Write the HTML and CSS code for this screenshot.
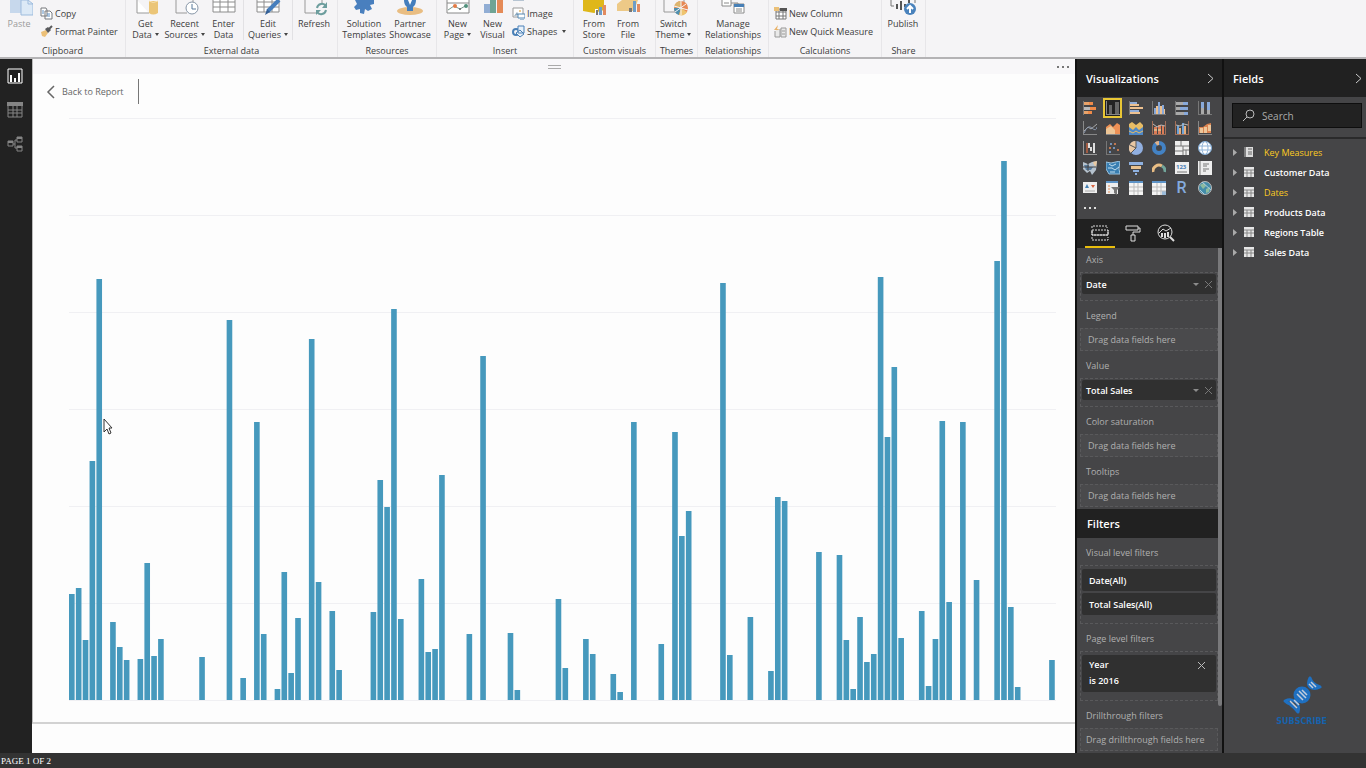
FILE: index.html
```html
<!DOCTYPE html>
<html lang="en">
<head>
    <meta charset="UTF-8">
    <meta name="viewport" content="width=device-width, initial-scale=1.0">
    <title>Report</title>
    <link rel="stylesheet" href="styles.css">
</head>
<body>
    <header class="ribbon">
        <section class="group">
            <div class="items">
                <button class="big paste"><svg width="28" height="17" viewBox="0 0 28 17"><path d="M5 0H17V13H5Z" fill="#c7d8ec"/><path d="M16 0H23L28 4V15H16Z" fill="#dce9f6" stroke="#9dbbdd"/><path d="M23 0V4H28" fill="none" stroke="#9dbbdd"/></svg><span>Paste</span></button>
                <div class="small-list">
                    <button class="small" aria-label="Cut"><svg width="13" height="13" viewBox="0 0 13 13"><circle cx="4" cy="8" r="2" fill="none" stroke="#999"/><circle cx="9" cy="8" r="2" fill="none" stroke="#999"/></svg></button>
                    <button class="small"><svg width="13" height="13" viewBox="0 0 13 13"><path d="M1 1H6L7 3V9H1ZM5 4H10L12 6V12H5Z" fill="#fff" stroke="#77797d"/><path d="M7 7H10M7 9H10M2 4H4M2 6H4" stroke="#5c8fc4"/></svg>Copy</button>
                    <button class="small"><svg width="13" height="13" viewBox="0 0 13 13"><path d="M1 7L6 5L8 8L5 12L2 11Z" fill="#ecc078"/><path d="M5 4L8 2L11 5L8 8Z" fill="#58595c"/><path d="M9 4L12 1" stroke="#58595c" stroke-width="2"/></svg>Format Painter</button>
                </div>
            </div>
            <h2>Clipboard</h2>
        </section>
        <section class="group">
            <div class="items">
                <button class="big w39"><svg width="28" height="17" viewBox="0 0 28 17"><path d="M5 0V13H17" fill="#fff" stroke="#999"/><path d="M17 1V13Q21 16 26 13V1Z" fill="#ebc577"/><path d="M17 1Q21 4 26 1" stroke="#f8e2b2" fill="none"/></svg><span>Get<br>Data<i></i></span></button>
                <button class="big w39"><svg width="28" height="17" viewBox="0 0 28 17"><path d="M5 0V13H16M22 0V2" fill="none" stroke="#999"/><circle cx="21" cy="8" r="6" fill="#fff" stroke="#8796a7"/><path d="M21 4V9H25" fill="none" stroke="#58789a"/></svg><span>Recent<br>Sources<i></i></span></button>
                <button class="big w39"><svg width="28" height="17" viewBox="0 0 28 17"><path d="M3 -2H25V12H3ZM3 2H25M3 7H25M10 0V12M18 0V12" fill="#fff" stroke="#8c8c8c"/></svg><span>Enter<br>Data</span></button>
                <button class="big w50 lined"><svg width="28" height="17" viewBox="0 0 28 17"><path d="M3 -2H25V12H3ZM3 2H25M3 7H25M10 0V12M18 0V12" fill="#fff" stroke="#8c8c8c"/><path d="M25 0L14 11" stroke="#477fbd" stroke-width="4"/><path d="M11 15L13 9L16 12Z" fill="#335f96"/></svg><span>Edit<br>Queries<i></i></span></button>
                <button class="big w42"><svg width="28" height="17" viewBox="0 0 28 17"><path d="M5 0V13H17M22 0V3" fill="none" stroke="#999"/><path d="M17 8A5 5 0 0 1 26 6M26 10A5 5 0 0 1 17 12" fill="none" stroke="#6c9d9d" stroke-width="2"/><path d="M27 2V8H22ZM16 15V10H21Z" fill="#6c9d9d"/></svg><span>Refresh</span></button>
            </div>
            <h2>External data</h2>
        </section>
        <section class="group">
            <div class="items pad">
                <button class="big w46"><svg width="28" height="17" viewBox="0 0 28 17"><path d="M4 -2H24V4L20 5L22 9L18 11L15 9L14 14L10 13V9L6 10L4 7L7 4Z" fill="#497fbe"/></svg><span>Solution<br>Templates</span></button>
                <button class="big w46"><svg width="28" height="17" viewBox="0 0 28 17"><ellipse cx="14" cy="11" rx="13" ry="4" fill="#e9bd82"/><path d="M8 0H20Q20 5 17 7V11H11V7Q8 5 8 0Z" fill="#447ebd"/><path d="M12 0H16L14 5Z" fill="#fff"/></svg><span>Partner<br>Showcase</span></button>
            </div>
            <h2>Resources</h2>
        </section>
        <section class="group">
            <div class="items pad">
                <button class="big w35"><svg width="28" height="17" viewBox="0 0 28 17"><path d="M3 -1H25V13H3ZM3 3H25" fill="#fff" stroke="#888"/><path d="M4 10L10 6L16 9L23 5" fill="none" stroke="#78958a"/><circle cx="11" cy="6" r="2" fill="#e47b45"/><circle cx="22" cy="6" r="2" fill="#51917c"/><circle cx="16" cy="9" r="1" fill="#666"/></svg><span>New<br>Page<i></i></span></button>
                <button class="big w35"><svg width="28" height="17" viewBox="0 0 28 17"><path d="M5 4H11V13H5Z" fill="#91add4"/><path d="M11 0H17V13H11Z" fill="#70a494"/><path d="M18 0H24V13H18Z" fill="#e58a57"/></svg><span>New<br>Visual</span></button>
                <div class="small-list">
                    <button class="small" aria-label="Text box"><svg width="13" height="13" viewBox="0 0 13 13"><path d="M1 1H12V11H1Z" fill="#dce9f6" stroke="#7993ae"/></svg></button>
                    <button class="small"><svg width="13" height="13" viewBox="0 0 13 13"><path d="M1 1H11V10H1Z" fill="#fff" stroke="#999"/><path d="M2 9L5 5L7 8" fill="#8da8bd"/><circle cx="8" cy="4" r="1" fill="#e9b869"/><path d="M6 7H13V11H6ZM8 13H12" fill="#fff" stroke="#5489b4"/></svg>Image</button>
                    <button class="small"><svg width="13" height="13" viewBox="0 0 13 13"><circle cx="4" cy="7" r="3" fill="none" stroke="#4a80b7" stroke-width="2"/><path d="M6 1H12V8H6ZM4 8L8 5L12 9L8 12Z" fill="#e8f1fa" stroke="#4a80b7"/></svg>Shapes<i></i></button>
                </div>
            </div>
            <h2>Insert</h2>
        </section>
        <section class="group">
            <div class="items pad">
                <button class="big w34"><svg width="28" height="17" viewBox="0 0 28 17"><path d="M3 0H24V10L14 13L3 11Z" fill="#dfb719"/><path d="M15 9H18V15H15Z" fill="#fff"/><path d="M16 10H18V15H16Z" fill="#777"/><path d="M19 7H22V15H19Z" fill="#6e9dc8"/><path d="M23 5H26V15H23Z" fill="#e28b60"/></svg><span>From<br>Store</span></button>
                <button class="big w34"><svg width="28" height="17" viewBox="0 0 28 17"><path d="M3 11V4L8 0H24L20 11Z" fill="#edc987"/><path d="M15 8H18V12H15Z" fill="#777"/><path d="M19 1H22V12H19Z" fill="#6e9dc8"/><path d="M23 4H26V12H23Z" fill="#e28b60"/></svg><span>From<br>File</span></button>
            </div>
            <h2>Custom visuals</h2>
        </section>
        <section class="group">
            <div class="items">
                <button class="big w35"><svg width="28" height="17" viewBox="0 0 28 17"><path d="M4 0V12H18M24 0V3" fill="none" stroke="#999"/><circle cx="21" cy="8" r="7" fill="#e78854"/><path d="M21 8V1A7 7 0 0 0 14 7Z" fill="#ddb56e"/><path d="M21 8L14 8A7 7 0 0 0 19 15Z" fill="#508fae"/><path d="M21 8L27 12A7 7 0 0 1 19 15Z" fill="#eec46f"/><path d="M21 1V15M14 6L28 10M15 12L26 4" stroke="#f5f4f6"/></svg><span>Switch<br>Theme<i></i></span></button>
            </div>
            <h2>Themes</h2>
        </section>
        <section class="group">
            <div class="items">
                <button class="big w70"><svg width="28" height="17" viewBox="0 0 28 17"><path d="M3 -3H12V6H3ZM5 3H10" fill="#fff" stroke="#8a8a8a"/><path d="M12 3H19V6" fill="none" stroke="#8a8a8a"/><path d="M15 4H25V13H15ZM17 9H23M17 11H23" fill="#fff" stroke="#8a8a8a"/><path d="M15 4H25V7H15Z" fill="#477fb6"/></svg><span>Manage<br>Relationships</span></button>
            </div>
            <h2>Relationships</h2>
        </section>
        <section class="group">
            <div class="items pad">
                <div class="small-list">
                    <button class="small" aria-label="New Measure"><svg width="13" height="13" viewBox="0 0 13 13"><path d="M3 5H12V11H3Z" fill="#aaa"/></svg></button>
                    <button class="small"><svg width="13" height="13" viewBox="0 0 13 13"><path d="M2 2H12V12H2ZM2 5H12M2 9H12M5 2V12M9 2V12" fill="#fff" stroke="#777"/><path d="M0 0H5V4H0Z" fill="#ebc077"/><path d="M6 1H13V4H6Z" fill="#555"/></svg>New Column</button>
                    <button class="small"><svg width="13" height="13" viewBox="0 0 13 13"><path d="M0 5L4 0L3 4H6L1 9L3 5Z" fill="#e9b36a"/><path d="M1 6V12H6V4M7 3H12V12H7ZM8 6H11M8 9H11" fill="#e9e9e9" stroke="#999"/></svg>New Quick Measure</button>
                </div>
            </div>
            <h2>Calculations</h2>
        </section>
        <section class="group">
            <div class="items">
                <button class="big w42"><svg width="28" height="17" viewBox="0 0 28 17"><path d="M2 0V6H5M26 0V3" fill="none" stroke="#777"/><path d="M8 4V9M12 1V10M16 4V7M20 0V3" stroke="#555" stroke-width="2"/><circle cx="21" cy="9" r="6" fill="#4982bc"/><path d="M21 13V6M18 9L21 6L24 9" fill="none" stroke="#fff" stroke-width="2"/></svg><span>Publish</span></button>
            </div>
            <h2>Share</h2>
        </section>
    </header>

    <div class="workspace">
        <nav class="rail">
            <button aria-label="Report view"><svg width="16" height="16" viewBox="0 0 16 16"><path d="M1 1H15V15H1Z" fill="none" stroke="#fff"/><path d="M4 14V7M8 14V10M12 14V5" stroke="#fff" stroke-width="2"/></svg></button>
            <button aria-label="Data view"><svg width="16" height="16" viewBox="0 0 16 16"><path d="M1 1H15V15H1ZM1 8H15M1 11H15M6 4V15M10 4V15" fill="none" stroke="#858585"/><path d="M0 0H16V4H0Z" fill="#858585"/></svg></button>
            <button aria-label="Relationship view"><svg width="16" height="16" viewBox="0 0 16 16"><path d="M1 5H6V10H1ZM10 1H15V6H10ZM10 10H15V15H10ZM6 8H8M8 4V12M8 4H10M8 12H10" fill="none" stroke="#858585"/><path d="M1 5H6V7H1ZM10 1H15V3H10ZM10 10H15V12H10Z" fill="#858585"/></svg></button>
        </nav>

        <main class="canvas">
            <div class="page">
                <div class="visual-bar">
                    <span></span>
                    <div class="grip"></div>
                    <button class="more" aria-label="More options"><svg width="12" height="3" viewBox="0 0 12 3"><path d="M0 1H2V3H0ZM5 1H7V3H5ZM10 1H12V3H10Z" fill="#777"/></svg></button>
                </div>
                <button class="back"><svg width="9" height="14" viewBox="0 0 9 14"><path d="M8 1L2 7L8 13" fill="none" stroke="#666" stroke-width="1.500"/></svg>Back to Report</button>
                <svg class="chart" id="chart" viewBox="0 0 987 583" preserveAspectRatio="none" role="img" aria-label="Total Sales by Date"></svg>
            </div>
            <svg class="cursor" width="10" height="17" viewBox="0 0 10 17"><path d="M1 1V14L4 11L6 16L8 15L6 10H9Z" fill="#fff" stroke="#333"/></svg>
        </main>

        <aside class="viz">
            <header class="pane-head"><h1>Visualizations</h1><button aria-label="Collapse visualizations"><svg width="7" height="11" viewBox="0 0 7 11"><path d="M1 1L6 5.500L1 10" fill="none" stroke="#ccc"/></svg></button></header>
            <div class="gallery">
                <button aria-label="Stacked bar"><svg viewBox="0 0 14 14"><path d="M.5 0V14" stroke="#777"/><path d="M1 1H6V4H1ZM1 10H5V13H1Z" fill="#e8a36a"/><path d="M6 1H10V4H6ZM5 10H9V13H5Z" fill="#ee8a49"/><path d="M1 6H7V9H1Z" fill="#bbb"/><path d="M7 6H13V9H7Z" fill="#ee8a49"/></svg></button>
                <button class="selected" aria-label="Stacked column"><svg viewBox="0 0 14 14"><path d="M.5 0V14M0 13.500H14" stroke="#888"/><path d="M3 4H6V13H3ZM9 1H13V13H9Z" fill="#666"/></svg></button>
                <button aria-label="Clustered bar"><svg viewBox="0 0 14 14"><path d="M.5 0V14" stroke="#777"/><path d="M1 1H8V3H1ZM1 9H10V11H1Z" fill="#91add8"/><path d="M1 3H10V5H1ZM1 6H14V8H1ZM1 11H11V13H1Z" fill="#edc08f"/></svg></button>
                <button aria-label="Clustered column"><svg viewBox="0 0 14 14"><path d="M.5 0V14M0 13.500H14" stroke="#777"/><path d="M2 7H4V13H2ZM6 1H8V13H6ZM10 4H12V13H10Z" fill="#88a9da"/><path d="M4 5H6V13H4ZM8 5H10V13H8ZM12 8H13V13H12Z" fill="#edc08f"/></svg></button>
                <button aria-label="100% stacked bar"><svg viewBox="0 0 14 14"><path d="M.5 0V14" stroke="#777"/><path d="M1 1H8V4H1ZM1 6H5V9H1ZM1 11H9V14H1Z" fill="#aaa"/><path d="M8 1H13V4H8ZM5 6H13V9H5ZM9 11H13V14H9Z" fill="#88a9da"/></svg></button>
                <button aria-label="100% stacked column"><svg viewBox="0 0 14 14"><path d="M.5 0V14M0 13.500H14" stroke="#777"/><path d="M3 1H6V7H3ZM9 1H12V9H9Z" fill="#88a9da"/><path d="M3 7H6V13H3ZM9 9H12V13H9Z" fill="#aaa"/></svg></button>

                <button aria-label="Line"><svg viewBox="0 0 14 14"><path d="M.5 0V14M0 13.500H14" stroke="#888"/><path d="M1 10L5 6L8 8L14 3" fill="none" stroke="#aaa"/><path d="M1 12Q5 3 9 7T14 6" fill="none" stroke="#8794a9"/></svg></button>
                <button aria-label="Area"><svg viewBox="0 0 14 14"><path d="M0 6L4 3L7 6L11 2L14 4V13H0Z" fill="#ed9055"/><path d="M0 8L5 5L9 9V13H0Z" fill="#edc595"/><path d="M0 13.500H14" stroke="#888"/></svg></button>
                <button aria-label="Stacked area"><svg viewBox="0 0 14 14"><path d="M0 3L3 1L7 4L11 1L14 4V13H0Z" fill="#e7bc65"/><path d="M0 6L4 9L7 6L10 9L14 6V14H0Z" fill="#4d87c7"/><path d="M0 10L4 12L7 10L10 12L14 10" stroke="#e7bc65" fill="none"/></svg></button>
                <button aria-label="Line and stacked column"><svg viewBox="0 0 14 14"><path d="M.5 0V14M0 13.500H14M13.500 0V14" stroke="#a37059"/><path d="M2 6H5V13H2ZM6 4H9V13H6ZM10 5H12V13H10Z" fill="#dc7d57"/><path d="M2 8H5V10H2ZM6 8H9V10H6Z" fill="#ddb184"/><path d="M1 3L5 6L9 4L13 5" fill="none" stroke="#bbb"/></svg></button>
                <button aria-label="Line and clustered column"><svg viewBox="0 0 14 14"><path d="M.5 0V14M0 13.500H14M13.500 0V14" stroke="#a37059"/><path d="M2 5H4V13H2ZM7 2H9V13H7Z" fill="#6ea3d8"/><path d="M4 7H6V13H4ZM9 5H11V13H9Z" fill="#e6ae7b"/><path d="M1 4L5 5L9 3L13 4" fill="none" stroke="#bbb"/></svg></button>
                <button aria-label="Ribbon"><svg viewBox="0 0 14 14"><path d="M.5 0V14M0 13.500H14" stroke="#888"/><path d="M1 6L5 6L9 3L13 2V12H1Z" fill="#d98250"/><path d="M2 7H5V12H2ZM6 6H9V12H6ZM10 4H13V10H10Z" fill="#ecc69a"/></svg></button>

                <button aria-label="Waterfall"><svg viewBox="0 0 14 14"><path d="M.5 0V14M0 13.500H14" stroke="#999"/><path d="M3 2H5V12H3Z" fill="#a05b43"/><path d="M5 2H7V7H5ZM7 6H9V10H7ZM10 2H12V12H10Z" fill="#ddd"/></svg></button>
                <button aria-label="Scatter"><svg viewBox="0 0 14 14"><path d="M.5 0V14M0 13.500H14" stroke="#777"/><g fill="#e98955"><circle cx="4" cy="7" r="1"/><circle cx="9" cy="3" r="1"/><circle cx="12" cy="9" r="1"/></g><g fill="#83aada"><circle cx="5" cy="3" r="1"/><circle cx="8" cy="7" r="1"/><circle cx="4" cy="11" r="1"/></g></svg></button>
                <button aria-label="Pie"><svg viewBox="0 0 14 14"><circle cx="7" cy="7" r="7" fill="#91afe0"/><path d="M7 7L7 0A7 7 0 0 0 2 12Z" fill="#e9c7a3"/><path d="M7 0V7L2 12M7 7L1 4" stroke="#555" fill="none"/></svg></button>
                <button aria-label="Donut"><svg viewBox="0 0 14 14"><circle cx="7" cy="7" r="5" fill="none" stroke="#4382c4" stroke-width="4"/><path d="M4 3A5 5 0 0 1 7 2" fill="none" stroke="#e2b38a" stroke-width="4"/></svg></button>
                <button aria-label="Treemap"><svg viewBox="0 0 14 14"><path d="M0 0H14V14H0Z" fill="#eee"/><path d="M0 5H14M6 0V5M8 5V14M8 9H14M11 9V14M0 10H8" stroke="#777"/></svg></button>
                <button aria-label="Map"><svg viewBox="0 0 14 14"><circle cx="7" cy="7" r="6.500" fill="#fff" stroke="#81acd8"/><ellipse cx="7" cy="7" rx="3" ry="6.500" fill="none" stroke="#8fb4d9"/><path d="M1 5H13M1 9H13" stroke="#8fb4d9"/></svg></button>

                <button aria-label="Filled map"><svg viewBox="0 0 14 14"><path d="M0 1L5 3L9 1L14 0L13 9L9 14L7 10L4 12L0 8Z" fill="#b5c2ce"/><path d="M1 4H6V6H10L8 9H3Z" fill="#587ea2"/><path d="M10 1L14 0L13 6L11 4Z" fill="#e8c8a1"/><path d="M0 6H13M5 2V10" stroke="#454547"/></svg></button>
                <button aria-label="Shape map"><svg viewBox="0 0 14 14"><path d="M0 1L5 2L14 0L13 8L14 13H3L0 8Z" fill="#397eb1" stroke="#9bc3df"/><path d="M3 3L6 5L10 3M2 7H6L9 9L13 6M4 11H9" stroke="#c4deee" fill="none"/></svg></button>
                <button aria-label="Funnel"><svg viewBox="0 0 14 14"><path d="M0 1H14V4H0ZM4 9H10V11H4Z" fill="#8eb0df"/><path d="M2 5H12V8H2Z" fill="#e8c08d"/><path d="M6 12H8V14H6Z" fill="#8eb0df"/></svg></button>
                <button aria-label="Gauge"><svg viewBox="0 0 14 14"><path d="M1 11A6 6 0 0 1 10 5" fill="none" stroke="#e9bd84" stroke-width="3"/><path d="M10 5A6 6 0 0 1 13 11" fill="none" stroke="#72a69b" stroke-width="3"/></svg></button>
                <button aria-label="Card"><svg viewBox="0 0 14 14"><path d="M0 1H14V13H0Z" fill="#eee"/><text x="1" y="8" class="card-num">123</text><path d="M2 11H12" stroke="#777"/></svg></button>
                <button aria-label="Multi-row card"><svg viewBox="0 0 14 14"><path d="M0 0H14V14H0Z" fill="#eee"/><path d="M2 0V14M5 3H11M5 5H9M5 8H11M5 10H8" stroke="#777"/></svg></button>

                <button aria-label="KPI"><svg viewBox="0 0 14 14"><path d="M0 1H14V12H0Z" fill="#eee"/><path d="M2 7L4 3L6 7Z" fill="#4380b4"/><path d="M8 4H12L10 7Z" fill="#d8623e"/><path d="M2 10H12" stroke="#aaa"/></svg></button>
                <button aria-label="Slicer"><svg viewBox="0 0 14 14"><path d="M0 1H12V13H0Z" fill="#eee"/><path d="M0 0H12V2H0Z" fill="#5d93c7"/><path d="M2 5H4M2 8H4M2 11H4" stroke="#e68c54"/><path d="M5 6H14L11 9V14L8 12V9Z" fill="#777"/></svg></button>
                <button aria-label="Table"><svg viewBox="0 0 14 14"><path d="M0 1H14V14H0Z" fill="#f4f4f4"/><path d="M0 0H14V2H0Z" fill="#5d93c7"/><path d="M0 6H14M0 10H14M5 2V14M9 2V14" stroke="#bbb"/></svg></button>
                <button aria-label="Matrix"><svg viewBox="0 0 14 14"><path d="M0 1H14V14H0Z" fill="#f4f4f4"/><path d="M0 0H14V2H0Z" fill="#5d93c7"/><path d="M10 10H14V14H10Z" fill="#9bbbd9"/><path d="M0 6H14M0 10H14M5 2V14M9 2V14" stroke="#bbb"/></svg></button>
                <button class="r-visual" aria-label="R script visual">R</button>
                <button aria-label="ArcGIS map"><svg viewBox="0 0 14 14"><circle cx="7" cy="7" r="6.500" fill="#438ca8" stroke="#bbb"/><path d="M2 4L6 2L8 5L5 8ZM8 8L12 6L11 11L8 12Z" fill="#8cbba0"/><path d="M2 9L6 13M4 1L13 9" stroke="#b0cede"/></svg></button>
                <button class="gallery-more" aria-label="More visuals"><svg class="dots" viewBox="0 0 14 3"><path d="M1 0H3V2H1ZM6 0H8V2H6ZM11 0H13V2H11Z" fill="#ddd"/></svg></button>
            </div>
            <div class="tabs">
                <button class="active" aria-label="Fields"><svg width="18" height="18" viewBox="0 0 18 18"><path d="M1 4V2H16V4M1 6H17V11H1ZM1 13V16H17V13" fill="none" stroke="#ddd" stroke-dasharray="2 1"/><path d="M1 6V11H17V6" fill="none" stroke="#ddd"/></svg></button>
                <button aria-label="Format"><svg width="18" height="18" viewBox="0 0 18 18"><path d="M2 2H14V6H2ZM14 4H16V8H9V11M7 11H11V17H7Z" fill="none" stroke="#ddd"/></svg></button>
                <button aria-label="Analytics"><svg width="18" height="18" viewBox="0 0 18 18"><circle cx="8" cy="8" r="7" fill="none" stroke="#ddd"/><path d="M13 13L17 17" stroke="#ddd" stroke-width="2"/><path d="M2 9L6 5L9 7L14 4" fill="none" stroke="#ddd"/><path d="M5 9V13M8 9V14M11 8V13" stroke="#ddd" stroke-width="2"/></svg></button>
            </div>
            <div class="wells">
                <div class="wells-body">
                    <div class="section">
                        <h3>Axis</h3>
                        <div class="well"><div class="chip"><b>Date</b><button class="drop" aria-label="Date options"></button><button class="remove" aria-label="Remove Date"><svg width="7" height="7" viewBox="0 0 7 7"><path d="M0 0L7 7M7 0L0 7"/></svg></button></div></div>
                        <h3>Legend</h3>
                        <div class="well empty">Drag data fields here</div>
                        <h3>Value</h3>
                        <div class="well"><div class="chip"><b>Total Sales</b><button class="drop" aria-label="Total Sales options"></button><button class="remove" aria-label="Remove Total Sales"><svg width="7" height="7" viewBox="0 0 7 7"><path d="M0 0L7 7M7 0L0 7"/></svg></button></div></div>
                        <h3>Color saturation</h3>
                        <div class="well empty">Drag data fields here</div>
                        <h3>Tooltips</h3>
                        <div class="well empty">Drag data fields here</div>
                    </div>
                    <h1 class="filters-head">Filters</h1>
                    <div class="section filters">
                        <h3>Visual level filters</h3>
                        <div class="well">
                            <div class="chip">Date(All)</div>
                            <div class="chip">Total Sales(All)</div>
                        </div>
                        <h3>Page level filters</h3>
                        <div class="well"><div class="chip tall"><p>Year<br>is 2016</p><button class="remove light" aria-label="Remove Year"><svg width="7" height="7" viewBox="0 0 7 7"><path d="M0 0L7 7M7 0L0 7"/></svg></button></div></div>
                        <h3>Drillthrough filters</h3>
                        <div class="well empty">Drag drillthrough fields here</div>
                    </div>
                </div>
                <div class="scrollbar"></div>
            </div>
        </aside>

        <aside class="fields">
            <header class="pane-head"><h1>Fields</h1><button aria-label="Collapse fields"><svg width="7" height="11" viewBox="0 0 7 11"><path d="M1 1L6 5.500L1 10" fill="none" stroke="#ccc"/></svg></button></header>
            <div class="search-row">
                <label class="search"><svg width="13" height="13" viewBox="0 0 13 13"><circle cx="8" cy="5" r="4" fill="none" stroke="#bbb"/><path d="M5 8L1 12" stroke="#bbb"/></svg><input type="text" placeholder="Search" aria-label="Search"></label>
            </div>
            <ul class="tree" id="tree"></ul>
            <a class="subscribe" href="#">
                <svg width="40" height="40" viewBox="0 0 40 40"><g fill="#1f70c1" stroke="#1f70c1" stroke-width="3" stroke-linejoin="round"><path d="M3 26Q9 23 14 27Q18 31 16 37Q12 32 8 29Q5 28 3 26Z" fill="none"/><circle cx="20" cy="20" r="7"/><path d="M28 3Q25 9 28 12Q32 15 38 12Q33 10 31 8Q29 6 28 3Z"/></g><path d="M8 26L15 33M12 25L17 30M15 19L21 25M17 16L24 23M20 15L25 20M27 9L31 13M29 7L34 12" stroke="#c2cddd" stroke-width="1.500"/></svg>
                <span>SUBSCRIBE</span>
            </a>
        </aside>
    </div>

    <footer class="status">PAGE 1 OF 2</footer>

    <script src="report.js"></script>
</body>
</html>
```
FILE: styles.css
```css
* {
    box-sizing: border-box;
}
body {
    margin: 0;
    height: 100vh;
    display: flex;
    flex-direction: column;
    overflow: hidden;
    font-family: "Open Sans", "Noto Sans", sans-serif;
    font-size: 9px;
    background: #fff;
}
button {
    padding: 0;
    border: none;
    background: none;
    font: inherit;
    color: inherit;
    cursor: pointer;
}
h1, h2, h3, p, ul {
    margin: 0;
    padding: 0;
    font-weight: normal;
}
svg {
    display: block;
    flex: none;
}

/* ribbon */
.ribbon {
    flex: none;
    height: 59px;
    display: grid;
    grid-template-columns: 126px 212px 99px 137px 82px 42px 71px 113px 44px;
    background: #f5f4f6;
    border-bottom: 2px solid #b4b3b5;
    overflow: hidden;
    color: #3c3c3c;
}
.group {
    display: flex;
    flex-direction: column;
    justify-content: flex-end;
    min-width: 0;
    height: 57px;
    border-right: 1px solid #e7e6e9;
}
.group h2 {
    padding-top: 5px;
    font-size: 9px;
    line-height: 12px;
    text-align: center;
}
.items {
    display: flex;
    align-items: flex-end;
}
.items.pad {
    padding-left: 3px;
}
.big {
    display: flex;
    flex-direction: column;
    align-items: center;
    line-height: 11px;
}
.big span {
    height: 22px;
    margin-top: 1px;
    white-space: nowrap;
}
.paste {
    width: 38px;
    color: #9b9b9b;
}
.w34 { width: 34px; }
.w35 { width: 35px; }
.w39 { width: 39px; }
.w42 { width: 42px; }
.w46 { width: 46px; }
.w50 { width: 50px; }
.w70 { width: 70px; }
.lined {
    border-left: 1px solid #e2e1e4;
    border-right: 1px solid #e2e1e4;
}
.big i, .small i {
    display: inline-block;
    margin-left: 3px;
    border: 2px solid transparent;
    border-top: 3px solid #444;
    border-bottom: none;
    vertical-align: 2px;
}
.small-list {
    height: 40px;
    display: flex;
    flex-direction: column;
    justify-content: flex-end;
    padding-left: 2px;
}
.small {
    height: 18px;
    flex: none;
    display: flex;
    align-items: center;
    gap: 2px;
    white-space: nowrap;
}

/* workspace */
.workspace {
    flex: 1;
    min-height: 0;
    display: flex;
}
.rail {
    width: 32px;
    display: flex;
    flex-direction: column;
    align-items: center;
    gap: 18px;
    padding: 9px 2px 0 0;
    background: #222;
}
.canvas {
    flex: 1;
    min-width: 0;
    position: relative;
    padding-bottom: 29px;
    background: #fdfdfd;
}
.page {
    height: 100%;
    display: flex;
    flex-direction: column;
    border-bottom: 2px solid #d2d2d2;
    border-left: 1px solid #bbb;
}
.visual-bar {
    height: 15px;
    display: grid;
    grid-template-columns: 1fr 13px 1fr;
    align-items: center;
    background: #f8f7f9;
}
.grip {
    height: 4px;
    border-top: 1px solid #aaa;
    border-bottom: 1px solid #aaa;
}
.more {
    justify-self: end;
    margin-right: 6px;
}
.back {
    align-self: flex-start;
    height: 25px;
    margin: 5px 0 0 12px;
    padding: 0 14px 0 1px;
    display: flex;
    align-items: center;
    gap: 7px;
    border-right: 1px solid #777;
    color: #666;
}
.chart {
    flex: 1;
    min-height: 0;
    width: calc(100% - 55px);
    margin: 14px 19px 21px 36px;
}
.chart line {
    stroke: #f0f0f3;
}
.chart rect {
    fill: #4699bd;
}
.cursor {
    position: absolute;
    left: 71px;
    top: 359px;
}

/* panes */
.viz, .fields {
    display: flex;
    flex-direction: column;
    background: #454547;
    color: #fff;
}
.viz {
    width: 149px;
    border-left: 2px solid #111;
    border-right: 2px solid #111;
}
.fields {
    width: 142px;
    position: relative;
}
.pane-head {
    height: 38px;
    flex: none;
    display: flex;
    align-items: center;
    justify-content: space-between;
    padding: 0 8px 0 9px;
    background: #212121;
}
.fields .pane-head {
    padding-right: 4px;
}
.pane-head h1, .filters-head {
    font-size: 11px;
    font-weight: 600;
}
.gallery {
    flex: none;
    display: grid;
    grid-template-columns: repeat(6, 23px);
    grid-auto-rows: 20px;
    height: 122px;
    padding: 1px 0 0 1px;
}
.gallery button {
    display: grid;
    place-items: center;
}
.gallery svg {
    width: 14px;
    height: 14px;
}
.gallery .dots {
    height: 3px;
}
.gallery .selected {
    margin: 0 2px;
    border: 2px solid #e8c635;
    background: #222;
}
.gallery .r-visual {
    font-family: Roboto, sans-serif;
    font-size: 16px;
    font-weight: 500;
    line-height: 16px;
    color: #84aadd;
}
.card-num {
    font-size: 6px;
    font-weight: bold;
    fill: #4a80b7;
}
.tabs {
    height: 29px;
    flex: none;
    display: flex;
    gap: 3px;
    padding-left: 8px;
    background: #212121;
}
.tabs button {
    width: 30px;
    display: grid;
    place-items: center;
    border-bottom: 2px solid transparent;
}
.tabs .active {
    border-color: #e8bd0c;
}
.wells {
    flex: 1;
    min-height: 0;
    display: flex;
    overflow: hidden;
}
.wells-body {
    flex: 1;
    min-width: 0;
}
.scrollbar {
    width: 4px;
    height: 458px;
    border-radius: 0 0 2px 2px;
    background: #79797b;
}
.section {
    padding: 4px 0 2px 3px;
}
.section h3 {
    margin: 0 0 4px 6px;
    font-size: 9px;
    line-height: 16px;
    color: #b0b0b0;
}
.well {
    display: flex;
    flex-direction: column;
    gap: 2px;
    margin-bottom: 7px;
    padding: 1px 1px 6px;
    border: 1px dashed #59595b;
}
.section .well:last-child {
    margin-bottom: 0;
}
.well.empty, .filters .well.empty {
    padding: 0 0 0 7px;
    line-height: 21px;
    white-space: nowrap;
    background: #4a4a4c;
    color: #b0b0b0;
}
.chip {
    height: 20px;
    display: flex;
    align-items: center;
    gap: 6px;
    padding: 0 4px;
    border-radius: 2px;
    background: #303030;
    font-weight: 600;
}
.chip b, .chip p {
    flex: 1;
    font-weight: 600;
}
.drop {
    border: 3px solid transparent;
    border-top-color: #8c8c8c;
    border-bottom: none;
}
.remove svg {
    stroke: #777;
}
.remove.light svg {
    stroke: #bbb;
}
.filters-head {
    padding-left: 10px;
    line-height: 29px;
    background: #212121;
}
.filters {
    padding-top: 7px;
}
.filters .well {
    padding: 3px 1px 8px;
}
.filters .well.empty {
    padding-left: 5px;
}
.filters .chip {
    height: 22px;
    padding: 0 11px 0 7px;
}
.filters .chip.tall {
    height: 37px;
    align-items: flex-start;
    padding-top: 2px;
    line-height: 16px;
}
.chip.tall .remove {
    padding-top: 5px;
}

.search-row {
    padding: 6px 4px 9px 8px;
    border-bottom: 2px solid #2a2a2b;
}
.search {
    height: 25px;
    display: flex;
    align-items: center;
    gap: 7px;
    padding-left: 9px;
    border: 1px solid #0e0e0e;
    background: #222;
}
.search input {
    flex: 1;
    min-width: 0;
    padding: 0;
    border: none;
    outline: none;
    background: none;
    font: inherit;
    font-size: 10px;
    color: #fff;
}
.search input::placeholder {
    color: #aaa;
}
.tree {
    padding: 3px 0 0 8px;
    list-style: none;
}
.tree button {
    height: 20px;
    display: flex;
    align-items: center;
    font-weight: 600;
}
.tree .arrow {
    width: 12px;
}
.tree .icon {
    width: 20px;
}
.tree .used {
    font-weight: 500;
    color: #fccb22;
}
.subscribe {
    position: absolute;
    right: 39px;
    bottom: 26px;
    display: flex;
    flex-direction: column;
    align-items: center;
    gap: 2px;
    font-family: "DejaVu Sans", sans-serif;
    font-size: 8px;
    font-weight: bold;
    line-height: 10px;
    text-decoration: none;
    color: #1762ab;
}

.status {
    flex: none;
    height: 15px;
    padding-left: 1px;
    font-family: "Liberation Serif", serif;
    font-size: 9px;
    line-height: 16px;
    background: #333;
    color: #fff;
}
```
FILE: report.js
```js
// [day slot, bar height] for days that had sales
const sales = [
    [0, 106], [1, 112], [2, 60], [3, 239], [4, 421], [6, 78], [7, 53], [8, 40],
    [10, 41], [11, 137], [12, 44], [13, 61], [19, 43], [23, 380], [25, 22],
    [27, 278], [28, 66], [30, 11], [31, 128], [32, 27], [33, 82], [35, 361],
    [36, 118], [38, 89], [39, 30], [44, 88], [45, 220], [46, 193], [47, 391],
    [48, 81], [51, 121], [52, 48], [53, 51], [54, 225], [58, 66], [60, 344],
    [64, 67], [65, 10], [71, 101], [72, 32], [75, 61], [76, 46], [79, 26],
    [80, 8], [82, 278], [86, 56], [88, 268], [89, 164], [90, 189], [95, 417],
    [96, 45], [99, 83], [102, 29], [103, 203], [104, 199], [109, 148],
    [112, 145], [113, 60], [114, 11], [115, 83], [116, 38], [117, 46],
    [118, 423], [119, 263], [120, 333], [121, 62], [124, 89], [125, 14],
    [126, 61], [127, 279], [128, 98], [130, 278], [132, 120], [135, 439],
    [136, 539], [137, 93], [138, 13], [143, 40]
];
const slots = 144;
const width = 987;
const base = 582;
const step = width / slots;

let marks = '';
for (let i = 0; i <= 6; i++) {
    const y = i * 97 + 0.5;
    marks += `<line x1="0" x2="${width}" y1="${y}" y2="${y}"/>`;
}
sales.forEach(([slot, height]) => {
    marks += `<rect x="${slot * step}" y="${base - height}" width="${step * 0.82}" height="${height}"/>`;
});
document.getElementById('chart').innerHTML = marks;

const tables = [
    { name: 'Key Measures', used: true, measures: true },
    { name: 'Customer Data' },
    { name: 'Dates', used: true },
    { name: 'Products Data' },
    { name: 'Regions Table' },
    { name: 'Sales Data' }
];
const gridIcon = '<path d="M0 0H10V10H0Z" fill="#e6e6e6"/><path d="M0 3H10M0 6H10M3 3V10M7 3V10" stroke="#888"/>';
const measureIcon = '<path d="M1 0V10" stroke="#bbb"/><path d="M2 0H9V10H2Z" fill="#ddd"/><path d="M4 2H8M4 5H8M4 7H8" stroke="#666"/>';

document.getElementById('tree').innerHTML = tables.map(table => `
    <li><button class="${table.used ? 'used' : ''}">
        <svg class="arrow" width="12" height="7" viewBox="0 0 12 7"><path d="M1 0L5 3.500L1 7Z" fill="#aaa"/></svg>
        <svg class="icon" width="20" height="10" viewBox="0 0 20 10"><g>${table.measures ? measureIcon : gridIcon}</g></svg>
        ${table.name}
    </button></li>`).join('');
```
